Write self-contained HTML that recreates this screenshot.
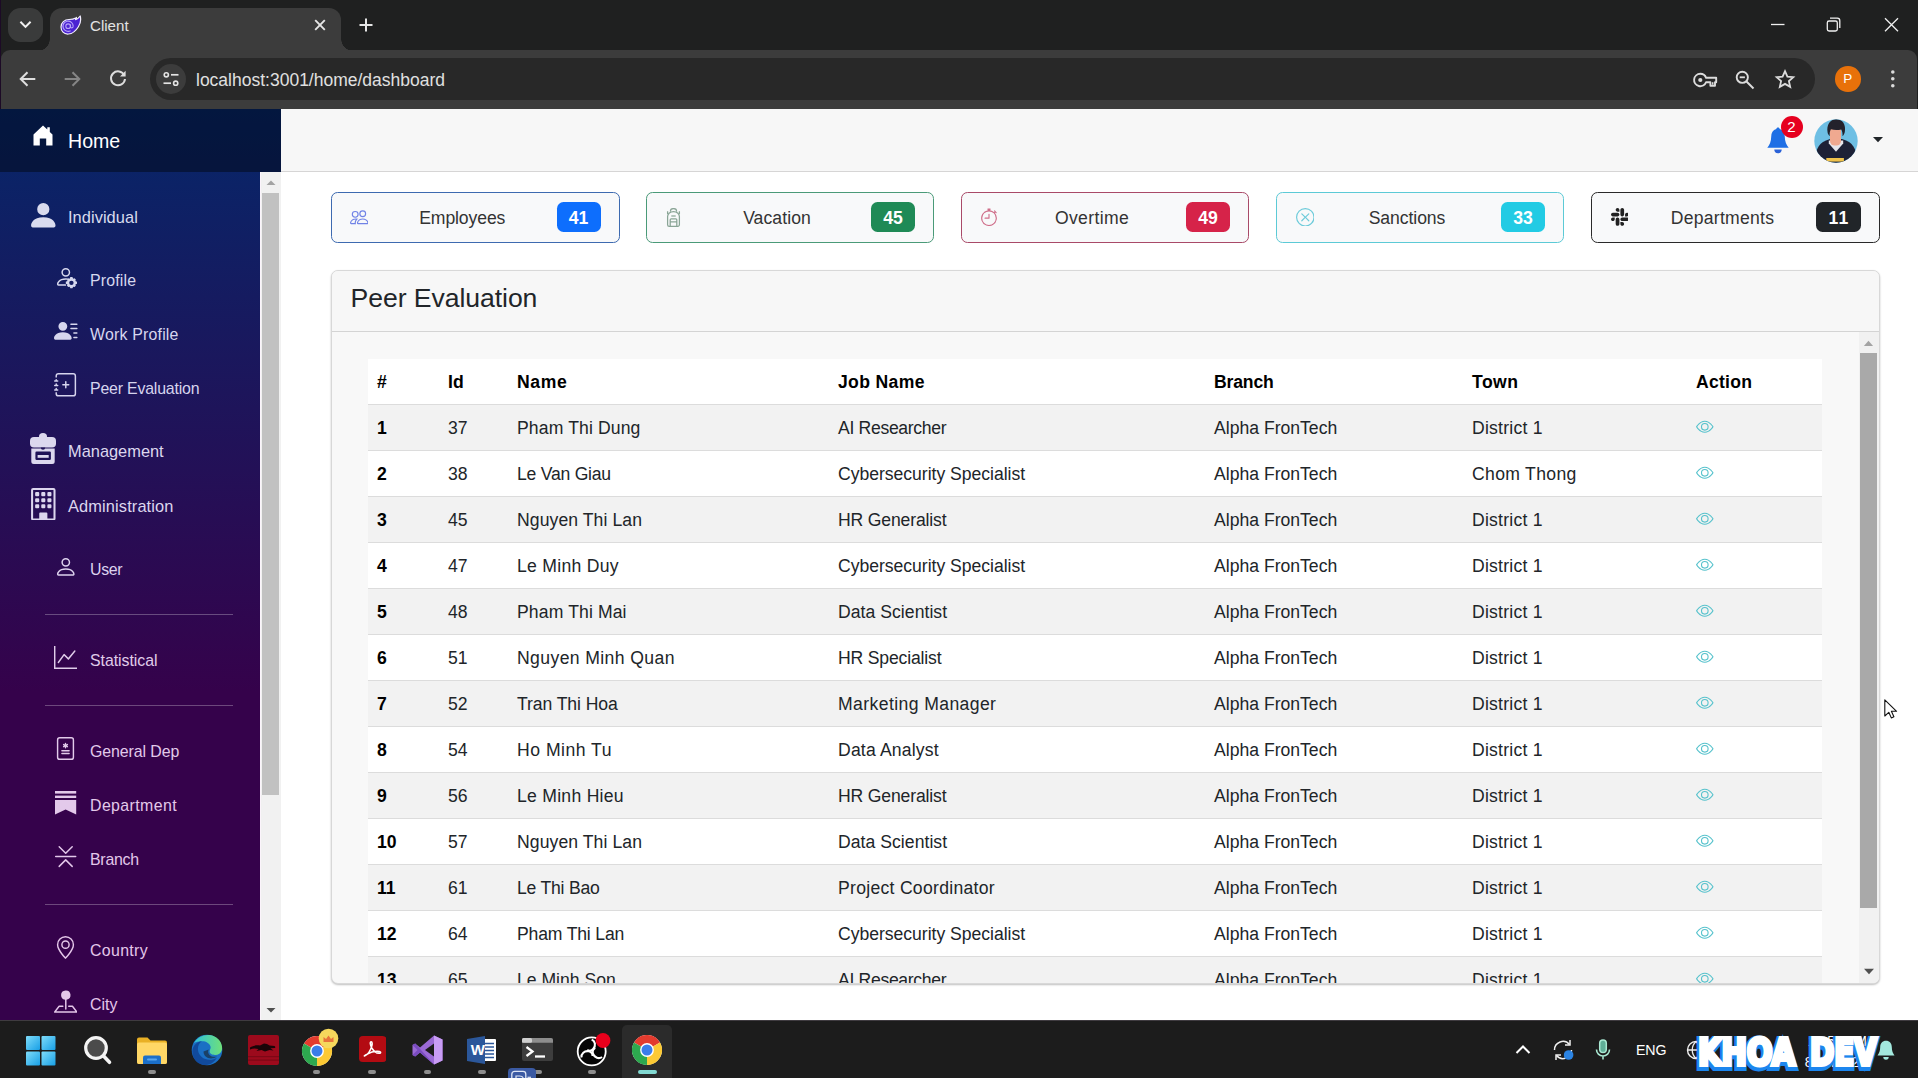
<!DOCTYPE html>
<html lang="en">
<head>
<meta charset="utf-8">
<title>Client</title>
<style>
*{box-sizing:border-box;margin:0;padding:0}
html,body{width:1918px;height:1078px;overflow:hidden;background:#1f2020}
body{position:relative;font-family:"Liberation Sans",sans-serif;color:#212529;font-size:17.6px}
.abs{position:absolute}
svg{display:block}
/* ---------- browser chrome ---------- */
#tabstrip{left:0;top:0;width:1918px;height:49px;background:#1f2020}
#tabsearch{left:8px;top:8px;width:35px;height:34px;border-radius:12.500px;background:#3a3b3b}
#tab{left:50px;top:7.500px;width:291px;height:43px;background:#3c3c3c;border-radius:12px 12px 0 0}
#tab:before,#tab:after{content:"";position:absolute;bottom:0;width:12px;height:12px}
#tab:before{left:-12px;background:radial-gradient(circle at 0 0,transparent 11.5px,#3c3c3c 12px)}
#tab:after{right:-12px;background:radial-gradient(circle at 100% 0,transparent 11.5px,#3c3c3c 12px)}
#tabtitle{left:90px;top:16px;font-size:15.100px;color:#e3e3e3;line-height:20px}
#toolbar{left:1px;top:49.5px;width:1916px;height:59px;background:#3c3c3c;border-radius:9px 9px 0 0}
#omni{left:150px;top:58px;width:1665px;height:42px;border-radius:21px;background:#282828}
#omnichip{left:156px;top:64px;width:30px;height:30px;border-radius:15px;background:#3c3c3c}
#url{left:196px;top:68.600px;font-size:17.500px;line-height:22px;color:#e0e0e0;white-space:nowrap;letter-spacing:0}
#pavatar{left:1835px;top:66px;width:25.5px;height:25.5px;border-radius:50%;background:#e8710a;color:#fff;font-size:13.5px;line-height:25px;text-align:center}
/* ---------- sidebar ---------- */
#sidebar{left:0;top:109px;width:281px;height:911px;background:linear-gradient(180deg,#06276a 0%,#35024b 64%)}
#sidehead{left:0;top:0;width:281px;height:63px;background:rgba(0,0,0,.4)}
#hometxt{left:68px;top:19px;font-size:19.6px;line-height:26px;color:#fff;white-space:nowrap}
#sidescroll{left:260px;top:63px;width:21px;height:848px;background:#f1f1f1;border-left:1px solid #fbf4fb}
#sidethumb{left:1.200px;top:21px;width:16.700px;height:602px;background:#c1c1c1}
.nav{position:absolute;white-space:nowrap;color:rgba(255,255,255,.84);font-size:15.900px;line-height:20px;margin-top:.800px}
.nav.g{font-size:16.400px;margin-top:-.200px}
.nav.g{left:68px}
.nav.s{left:90px}
.ico{position:absolute}
.hr{position:absolute;left:45px;width:188px;height:1px;background:rgba(255,255,255,.28)}
/* ---------- top bar ---------- */
#topbar{left:281px;top:109px;width:1637px;height:63px;background:#f7f7f7;border-bottom:1px solid #d6d5d5}
/* ---------- main ---------- */
#main{left:281px;top:172px;width:1637px;height:848px;background:#fff}
.card{position:absolute;top:192px;width:288px;height:50.500px;border-radius:6.500px;border:1.200px solid;background:#f8f9fa}
.card .lbl{position:absolute;left:0;right:26px;top:14px;text-align:center;font-size:17.6px;line-height:22px;color:#333}
.card .badge{position:absolute;right:18px;top:8.700px;width:44px;height:30px;border-radius:6.500px;color:#fff;font-weight:700;font-size:17.6px;line-height:30px;padding-top:1px;text-align:center}
.card .ci{position:absolute}
#panel{left:331px;top:270px;width:1549px;height:714px;border:1px solid #d8d8d8;border-radius:7px;background:#f8f8f8;overflow:hidden;box-shadow:0 1px 2px rgba(0,0,0,.25)}
#phead{left:0;top:0;width:1547px;height:61px;background:#f7f7f7;border-bottom:1px solid #d4d4d4}
#ptitle{left:18.500px;top:10.800px;font-size:26.600px;letter-spacing:-.06px;line-height:32px;color:#212529;white-space:nowrap}
#pbody{left:0;top:61px;width:1547px;height:652px;overflow:hidden}
table{position:absolute;left:36px;top:27px;width:1454px;border-collapse:collapse;table-layout:fixed;background:#fff}
th,td{height:46px;padding:0 0 0 9px;text-align:left;vertical-align:middle;border-bottom:1px solid #dcdcdc;font-size:17.6px;white-space:nowrap;overflow:hidden}
th{font-weight:700;color:#000;height:45.500px;padding-top:1px}
td{color:#212529;padding-top:1px}
td.b{font-weight:700;color:#000}
tbody tr:nth-child(odd) td{background:#f2f2f2}
.eye{margin-left:0;position:relative;top:-1.500px}
#pscroll{left:1527px;top:61px;width:20px;height:652px;background:#f1f1f1}
#pthumb{left:1.200px;top:20.800px;width:16.800px;height:555px;background:#a9a9a9}
/* ---------- taskbar ---------- */
#taskbar{left:0;top:1020px;width:1918px;height:58px;background:#1c1c1c;overflow:hidden;box-shadow:inset 0 1px 0 #3f3b40}
.pill{position:absolute;top:50px;width:7.500px;height:3.500px;border-radius:2px;background:#8e8e8e}
.wm{position:absolute;font-family:"DejaVu Sans","Liberation Sans",sans-serif;font-weight:700;font-size:36.500px;line-height:44px;letter-spacing:0;white-space:nowrap;height:44px;transform-origin:0 0}
.wm span{position:absolute;left:0;top:0}
.wmb{color:#1c86ee;-webkit-text-stroke:8px #1c86ee;transform:translate(-1px,1.500px)}
.wmf{color:#fff;-webkit-text-stroke:4px #fff}
</style>
</head>
<body>
<div id="tabstrip" class="abs"></div>
<div id="tabsearch" class="abs"><svg width="35" height="34" viewBox="0 0 35 34"><path d="M12.400 13.800l5.100 5.100 5.100-5.100" fill="none" stroke="#f0f0f0" stroke-width="2" stroke-linecap="butt" stroke-linejoin="miter"/></svg></div>
<div id="toolbar" class="abs"></div>
<div id="tab" class="abs"></div>
<!-- favicon -->
<svg class="abs" style="left:59.500px;top:15px" width="22" height="20" viewBox="0 0 22 20">
<path d="M20.200 1c1 3.800.300 7.400-1.800 10.700-2.200 3.600-5.600 6.900-10 7.300C3.900 19.400 1 16 1 12 1 7.600 4.500 4.600 9 4.500c2.900-.1 5-.6 6.700-1.600l.7-.5c-.2.900-.4 1.500-.8 2.200 1.900-.7 3.400-1.900 4.600-3.600z" fill="#4b23d2" stroke="#f3efff" stroke-width="1.200" stroke-linejoin="round"/>
<path d="M13.200 11.300a5.100 5.100 0 1 0-2.600 4.400" fill="none" stroke="#b6a3f7" stroke-width="1.150"/>
<circle cx="8.100" cy="11.200" r="2.300" fill="none" stroke="#b6a3f7" stroke-width="1.100"/>
<path d="M10.500 9.500v2.400c0 1.300 2.600 1.400 2.700-.6" fill="none" stroke="#b6a3f7" stroke-width="1.100"/>
</svg>
<div id="tabtitle" class="abs">Client</div>
<svg class="abs" style="left:312px;top:17px" width="16" height="16" viewBox="0 0 16 16"><path d="M3.200 3.200l9.600 9.600M12.800 3.200l-9.600 9.600" stroke="#e6e6e6" stroke-width="1.900" fill="none"/></svg>
<svg class="abs" style="left:357px;top:16px" width="18" height="18" viewBox="0 0 18 18"><path d="M9 2.500v13M2.500 9h13" stroke="#e6e6e6" stroke-width="2" fill="none"/></svg>
<!-- window controls -->
<svg class="abs" style="left:1765px;top:12px" width="140" height="26" viewBox="0 0 140 26">
<path d="M6 12.500h13.500" stroke="#f0f0f0" stroke-width="1.300" fill="none"/>
<rect x="62.300" y="9" width="10" height="10" rx="1.800" fill="none" stroke="#f0f0f0" stroke-width="1.300"/>
<path d="M65 6.200h7.300a2.500 2.500 0 0 1 2.500 2.500v7.300" fill="none" stroke="#f0f0f0" stroke-width="1.300"/>
<path d="M120 6.300l13 13M133 6.300l-13 13" stroke="#f0f0f0" stroke-width="1.300" fill="none"/>
</svg>
<!-- nav buttons -->
<svg class="abs" style="left:16px;top:67px" width="24" height="24" viewBox="0 0 24 24"><path d="M19.300 12H4.800M11.500 5.200L4.700 12l6.800 6.800" stroke="#dedede" stroke-width="2" fill="none"/></svg>
<svg class="abs" style="left:60px;top:67px" width="24" height="24" viewBox="0 0 24 24"><path d="M4.700 12h14.500M12.500 5.200l6.800 6.800-6.800 6.800" stroke="#858585" stroke-width="2" fill="none"/></svg>
<svg class="abs" style="left:106px;top:67px" width="24" height="24" viewBox="0 0 24 24"><path d="M18.300 8.200A7 7 0 1 0 19 12" stroke="#dedede" stroke-width="2" fill="none"/><path d="M19.600 3.800v5.600H14z" fill="#dedede"/></svg>
<div id="omni" class="abs"></div>
<div id="omnichip" class="abs"></div>
<svg class="abs" style="left:161px;top:69px" width="20" height="20" viewBox="0 0 20 20"><circle cx="5.300" cy="5.800" r="2.100" fill="none" stroke="#e3e3e3" stroke-width="1.600"/><path d="M10 5.800h7.500" stroke="#e3e3e3" stroke-width="1.700"/><circle cx="14.700" cy="14.200" r="2.100" fill="none" stroke="#e3e3e3" stroke-width="1.600"/><path d="M2.500 14.200H10" stroke="#e3e3e3" stroke-width="1.700"/></svg>
<div id="url" class="abs">localhost:3001/home/dashboard</div>
<!-- key -->
<svg class="abs" style="left:1692px;top:70px" width="26" height="20" viewBox="0 0 26 20"><path d="M8.300 3.800a6.200 6.200 0 1 0 5.800 8.400h4.300v3.600h4.600v-3.600h1.200V7.800H14.100A6.200 6.200 0 0 0 8.300 3.800z" fill="none" stroke="#dcdcdc" stroke-width="1.900" stroke-linejoin="round"/><circle cx="8.300" cy="10" r="2.100" fill="#dcdcdc"/><path d="M20.700 12.200v2.500" stroke="#dcdcdc" stroke-width="1.500"/></svg>
<!-- zoom out -->
<svg class="abs" style="left:1734px;top:69px" width="22" height="22" viewBox="0 0 22 22"><circle cx="8.300" cy="8.300" r="5.600" fill="none" stroke="#dcdcdc" stroke-width="1.900"/><path d="M12.500 12.500l7 7" stroke="#dcdcdc" stroke-width="2"/><path d="M5.700 8.300h5.200" stroke="#dcdcdc" stroke-width="1.800"/></svg>
<!-- star -->
<svg class="abs" style="left:1774px;top:68px" width="22" height="22" viewBox="0 0 22 22"><path d="M11 3.200l2.400 5.400 5.900.6-4.400 3.900 1.300 5.800L11 15.900l-5.200 3 1.300-5.800L2.700 9.200l5.900-.6z" fill="none" stroke="#dcdcdc" stroke-width="1.800" stroke-linejoin="miter"/></svg>
<div id="pavatar" class="abs">P</div>
<svg class="abs" style="left:1888px;top:68px" width="10" height="22" viewBox="0 0 10 22"><circle cx="4.800" cy="4" r="1.800" fill="#dcdcdc"/><circle cx="4.800" cy="10.800" r="1.800" fill="#dcdcdc"/><circle cx="4.800" cy="17.700" r="1.800" fill="#dcdcdc"/></svg>
<div class="abs" style="left:0;top:0;width:1px;height:1020px;background:#1c0a26"></div>
<div id="sidebar" class="abs">
<div id="sidehead" class="abs">
<svg class="ico" style="left:33px;top:16px" width="20" height="21" viewBox="0 0 20 21"><path d="M10 .600l4.300 4V2.200h2.500v4.700l2.700 2.500v11h-6.300v-6.800H6.800v6.800H.5v-11z" fill="#fff"/></svg>
<div id="hometxt" class="abs">Home</div></div>
<div id="sidescroll" class="abs"><div id="sidethumb" class="abs"></div>
<svg class="abs" style="left:4px;top:7px" width="12" height="8" viewBox="0 0 12 8"><path d="M6 1.500l4.500 4.500h-9z" fill="#a3a3a3"/></svg>
<svg class="abs" style="left:4px;top:833.500px" width="12" height="8" viewBox="0 0 12 8"><path d="M6 6.500L1.500 2h9z" fill="#505050"/></svg>
</div>
<!-- Individual : person-fill -->
<svg class="ico" style="left:26.700px;top:89.600px" width="32.600" height="32.600" viewBox="0 0 16 16" fill="#d9dbee"><path d="M3 14s-1 0-1-1 1-4 6-4 6 3 6 4-1 1-1 1zm5-6a3 3 0 1 0 0-6 3 3 0 0 0 0 6"/></svg>
<div class="nav g" style="color:#d9dbee;top:98px;letter-spacing:0.06px">Individual</div>
<!-- Profile : person-gear -->
<svg class="ico" style="left:53.600px;top:156px" width="23.600" height="23.600" viewBox="0 0 16 16" fill="#d6d8ee"><path d="M11 5a3 3 0 1 1-6 0 3 3 0 0 1 6 0M8 7a2 2 0 1 0 0-4 2 2 0 0 0 0 4m.256 7a4.500 4.500 0 0 1-.229-1.004H3c.001-.246.154-.986.832-1.664C4.484 10.680 5.711 10 8 10q.390 0 .740.025c.226-.341.496-.650.804-.918Q8.844 9.002 8 9c-5 0-6 3-6 4s1 1 1 1z"/><path d="M12.500 8.200l.5 1.100.9-.3.900.9-.3.900 1.100.5v1.400l-1.100.5.300.9-.9.900-.9-.3-.5 1.100h-1.400l-.5-1.100-.9.300-.9-.9.300-.9-1.100-.5v-1.400l1.100-.5-.3-.9.900-.9.900.3.500-1.100zM11.800 10.600a1.500 1.500 0 1 0 0 3 1.500 1.500 0 0 0 0-3z" fill-rule="evenodd"/></svg>
<div class="nav s" style="color:#d6d8ee;top:161px;letter-spacing:0.18px">Profile</div>
<!-- Work Profile : person-lines-fill -->
<svg class="ico" style="left:54px;top:209.800px" width="23.600" height="23.600" viewBox="0 0 16 16" fill="#d6d6ee"><path d="M6 8a3 3 0 1 0 0-6 3 3 0 0 0 0 6m-5 6s-1 0-1-1 1-4 6-4 6 3 6 4-1 1-1 1zM11 3.500a.5.5 0 0 1 .5-.5h4a.5.5 0 0 1 0 1h-4a.5.5 0 0 1-.5-.5m.5 2.500a.5.5 0 0 0 0 1h4a.5.5 0 0 0 0-1zm2 3a.5.5 0 0 0 0 1h2a.5.5 0 0 0 0-1zm0 3a.5.5 0 0 0 0 1h2a.5.5 0 0 0 0-1z"/></svg>
<div class="nav s" style="color:#d6d6ee;top:215px;letter-spacing:0.20px">Work Profile</div>
<!-- Peer Evaluation : journal-plus -->
<svg class="ico" style="left:53.500px;top:264px" width="23.600" height="23.600" viewBox="0 0 16 16" fill="#d6d4ee"><path fill-rule="evenodd" d="M8 5.500a.5.5 0 0 1 .5.5v1.500H10a.5.5 0 0 1 0 1H8.500V10a.5.5 0 0 1-1 0V8.500H6a.5.5 0 0 1 0-1h1.500V6a.5.5 0 0 1 .5-.5"/><path d="M3 0h10a2 2 0 0 1 2 2v12a2 2 0 0 1-2 2H3a2 2 0 0 1-2-2v-1h1v1a1 1 0 0 0 1 1h10a1 1 0 0 0 1-1V2a1 1 0 0 0-1-1H3a1 1 0 0 0-1 1v1H1V2a2 2 0 0 1 2-2"/><path d="M1 5v-.5a.5.5 0 0 1 1 0V5h.5a.5.5 0 0 1 0 1h-2a.5.5 0 0 1 0-1zm0 3v-.5a.5.5 0 0 1 1 0V8h.5a.5.5 0 0 1 0 1h-2a.5.5 0 0 1 0-1zm0 3v-.5a.5.5 0 0 1 1 0v.5h.5a.5.5 0 0 1 0 1h-2a.5.5 0 0 1 0-1z"/></svg>
<div class="nav s" style="color:#d6d4ee;top:269px;letter-spacing:-0.19px">Peer Evaluation</div>
<!-- Management : backpack -->
<svg class="ico" style="left:27px;top:323px" width="32" height="34" viewBox="0 0 32 34"><path d="M12 4.500a4 3.500 0 0 1 8 0v1.500h-8z" fill="#dcd8ee"/><rect x="3" y="5" width="26" height="10.500" rx="4" fill="#dcd8ee"/><path d="M4.300 16.500h23.400v13a2.500 2.500 0 0 1-2.500 2.500H6.800a2.500 2.500 0 0 1-2.500-2.500z" fill="#dcd8ee"/><path d="M13.800 15.600a2.200 2.200 0 0 0 4.400 0z" fill="#1f1258"/><rect x="8.400" y="19.600" width="15.500" height="8.400" rx="1.200" fill="#1f1258"/><rect x="10.600" y="23" width="11.100" height="2.800" fill="#dcd8ee"/></svg>
<div class="nav g" style="color:#dcd8ee;top:332px">Management</div>
<!-- Administration : building -->
<svg class="ico" style="left:26.800px;top:378.600px" width="32.600" height="32.600" viewBox="0 0 16 16" fill="#dcd6ee"><path d="M4 2.500a.5.5 0 0 1 .5-.5h1a.5.5 0 0 1 .5.5v1a.5.5 0 0 1-.5.5h-1a.5.5 0 0 1-.5-.5zm3 0a.5.5 0 0 1 .5-.5h1a.5.5 0 0 1 .5.5v1a.5.5 0 0 1-.5.5h-1a.5.5 0 0 1-.5-.5zm3.500-.5a.5.5 0 0 0-.5.5v1a.5.5 0 0 0 .5.5h1a.5.5 0 0 0 .5-.5v-1a.5.5 0 0 0-.5-.5zM4 5.500a.5.5 0 0 1 .5-.5h1a.5.5 0 0 1 .5.5v1a.5.5 0 0 1-.5.5h-1a.5.5 0 0 1-.5-.5zM7.500 5a.5.5 0 0 0-.5.5v1a.5.5 0 0 0 .5.5h1a.5.5 0 0 0 .5-.5v-1a.5.5 0 0 0-.5-.5zm2.500.5a.5.5 0 0 1 .5-.5h1a.5.5 0 0 1 .5.5v1a.5.5 0 0 1-.5.5h-1a.5.5 0 0 1-.5-.5zM4.500 8a.5.5 0 0 0-.5.5v1a.5.5 0 0 0 .5.5h1a.5.5 0 0 0 .5-.5v-1a.5.5 0 0 0-.5-.5zm2.500.5a.5.5 0 0 1 .5-.5h1a.5.5 0 0 1 .5.5v1a.5.5 0 0 1-.5.5h-1a.5.5 0 0 1-.5-.5zm3.500-.5a.5.5 0 0 0-.5.5v1a.5.5 0 0 0 .5.5h1a.5.5 0 0 0 .5-.5v-1a.5.5 0 0 0-.5-.5z"/><path d="M2 1a1 1 0 0 1 1-1h10a1 1 0 0 1 1 1v14a1 1 0 0 1-1 1H3a1 1 0 0 1-1-1zm11 0H3v14h3v-2.500a.5.5 0 0 1 .5-.5h3a.5.5 0 0 1 .5.5V15h3z"/></svg>
<div class="nav g" style="color:#dcd6ee;top:387px;letter-spacing:0.12px">Administration</div>
<!-- User : person -->
<svg class="ico" style="left:53.800px;top:445.800px" width="23.600" height="23.600" viewBox="0 0 16 16" fill="#ddd2ee"><path d="M8 8a3 3 0 1 0 0-6 3 3 0 0 0 0 6m2-3a2 2 0 1 1-4 0 2 2 0 0 1 4 0m4 8c0 1-1 1-1 1H3s-1 0-1-1 1-4 6-4 6 3 6 4m-1-.004c-.001-.246-.154-.986-.832-1.664C11.516 10.680 10.289 10 8 10s-3.516.680-4.168 1.332c-.678.678-.830 1.418-.832 1.664z"/></svg>
<div class="nav s" style="color:#ddd2ee;top:450px;letter-spacing:-0.35px">User</div>
<div class="hr" style="top:505px"></div>
<!-- Statistical : graph-up -->
<svg class="ico" style="left:54.100px;top:537px" width="23" height="23" viewBox="0 0 16 16" fill="#e0cdea"><path fill-rule="evenodd" d="M0 0h1v15h15v1H0zm14.817 3.113a.5.5 0 0 1 .070.704l-4.500 5.500a.5.5 0 0 1-.740.037L7.060 6.767l-3.656 5.027a.5.5 0 0 1-.808-.588l4-5.500a.5.5 0 0 1 .758-.060l2.609 2.610 4.150-5.073a.5.5 0 0 1 .704-.070"/></svg>
<div class="nav s" style="color:#e0cdea;top:541px;letter-spacing:-0.05px">Statistical</div>
<div class="hr" style="top:596px"></div>
<!-- General Dep : file-medical -->
<svg class="ico" style="left:54px;top:627.900px" width="23" height="23" viewBox="0 0 16 16" fill="#e2caea"><path d="M8.500 4.500a.5.5 0 0 0-1 0v.634l-.549-.317a.5.5 0 1 0-.5.866L7 6l-.549.317a.5.5 0 1 0 .5.866l.549-.317V7.500a.5.5 0 1 0 1 0v-.634l.549.317a.5.5 0 1 0 .5-.866L9 6l.549-.317a.5.5 0 1 0-.5-.866l-.549.317zM5.500 9a.5.5 0 0 0 0 1h5a.5.5 0 0 0 0-1zm0 2a.5.5 0 0 0 0 1h5a.5.5 0 0 0 0-1z"/><path d="M2 2a2 2 0 0 1 2-2h8a2 2 0 0 1 2 2v12a2 2 0 0 1-2 2H4a2 2 0 0 1-2-2zm10-1H4a1 1 0 0 0-1 1v12a1 1 0 0 0 1 1h8a1 1 0 0 0 1-1V2a1 1 0 0 0-1-1"/></svg>
<div class="nav s" style="color:#e2caea;top:632px;letter-spacing:-0.08px">General Dep</div>
<!-- Department -->
<svg class="ico" style="left:55px;top:681.500px" width="21.500" height="24" viewBox="0 0 21.500 24" fill="#e3c9ea"><rect x="0" y="0" width="21.200" height="2.600"/><rect x="0" y="4.600" width="21.200" height="2.400"/><path d="M0 9h21.200v14.500L10.600 18.600 0 23.500z"/></svg>
<div class="nav s" style="color:#e3c9ea;top:686px;letter-spacing:0.40px">Department</div>
<!-- Branch : chevron-bar-contract -->
<svg class="ico" style="left:54px;top:736px" width="24" height="23" viewBox="0 0 24 23" fill="none" stroke="#e3c8ea" stroke-width="1.500" stroke-linecap="round" stroke-linejoin="round"><path d="M5.200 1.700l6.500 6.500 6.500-6.500M1.700 11.600h20M5.200 21.400l6.500-6.500 6.500 6.500"/></svg>
<div class="nav s" style="color:#e3c8ea;top:740px;letter-spacing:-0.25px">Branch</div>
<div class="hr" style="top:795px"></div>
<!-- Country : geo-alt -->
<svg class="ico" style="left:53.800px;top:826.900px" width="23" height="23" viewBox="0 0 16 16" fill="#e4c7e9"><path d="M12.166 8.940c-.524 1.062-1.234 2.120-1.960 3.070A32 32 0 0 1 8 14.580a32 32 0 0 1-2.206-2.570c-.726-.950-1.436-2.008-1.960-3.070C3.304 7.867 3 6.862 3 6a5 5 0 0 1 10 0c0 .862-.305 1.867-.834 2.940M8 16s6-5.686 6-10A6 6 0 0 0 2 6c0 4.314 6 10 6 10"/><path d="M8 8a2 2 0 1 1 0-4 2 2 0 0 1 0 4m0 1a3 3 0 1 0 0-6 3 3 0 0 0 0 6"/></svg>
<div class="nav s" style="color:#e4c7e9;top:831px;letter-spacing:0.33px">Country</div>
<!-- City : pin-map-fill -->
<svg class="ico" style="left:53.800px;top:879.500px" width="23.600" height="24" viewBox="0 0 16 16" fill="#e4c7e9"><path fill-rule="evenodd" d="M3.100 11.200a.5.5 0 0 1 .4-.2H6a.5.5 0 0 1 0 1H3.750L1.500 15h13l-2.250-3H10a.5.5 0 0 1 0-1h2.500a.5.5 0 0 1 .4.2l3 4a.5.5 0 0 1-.4.8H.5a.5.5 0 0 1-.4-.8z"/><path fill-rule="evenodd" d="M4.800 4a3.200 3.200 0 1 1 3.700 3.160V13.500a.5.5 0 0 1-1 0V7.160A3.200 3.200 0 0 1 4.800 4"/></svg>
<div class="nav s" style="color:#e4c7e9;top:885px;letter-spacing:0.04px">City</div>
</div>
<div id="topbar" class="abs"></div>
<!-- bell -->
<svg class="abs" style="left:1765px;top:126px" width="26" height="30" viewBox="0 0 26 30"><path d="M13 1.500c-.9 0-1.700.7-1.700 1.600-3.400.9-5.100 3.900-5.100 7.700 0 4.800-1.600 8.300-3.900 10.900h21.400c-2.300-2.600-3.900-6.100-3.900-10.900 0-3.800-1.700-6.800-5.100-7.700 0-.9-.8-1.600-1.700-1.600z" fill="#1f6fe5"/><path d="M9.300 23.600h7.400a3.700 3.700 0 0 1-7.400 0z" fill="#2a62d8"/></svg>
<div class="abs" style="left:1780.500px;top:116px;width:22px;height:22px;border-radius:50%;background:#e6001f;color:#fff;font-size:15px;line-height:22px;text-align:center">2</div>
<!-- avatar -->
<svg class="abs" style="left:1814px;top:119px" width="44" height="44" viewBox="0 0 44 44">
<defs><clipPath id="avc"><circle cx="22" cy="22" r="21.700"/></clipPath></defs>
<g clip-path="url(#avc)">
<rect width="44" height="44" fill="#6ebfe4"/>
<path d="M1 44c0-10 2-19 11-22.500l4-1.500h12l4 1.500c9 3.500 11 12.500 11 22.500z" fill="#1d2136"/>
<path d="M14.800 24.500l7.200 8.200 7.200-8.200v-3h-14.400z" fill="#e6e6ec"/>
<rect x="16" y="7" width="11" height="19.500" rx="4.500" fill="#f0a990"/>
<path d="M13.600 13.500c-1.300-7.500 2.400-13.300 8.600-13.300 6.400 0 10 5.300 8.600 12.800-.4 2-1.300 3.300-2.300 4.300.3-3.100-.3-5.300-1.300-6.900-2.800.8-7.400.9-10.300-.2-1 1.700-1.500 4.200-1.100 7-1.100-.9-1.900-2.100-2.200-3.700z" fill="#23222c"/>
<rect x="12.300" y="39" width="17.600" height="3.600" fill="#efc24c"/>
</g></svg>
<svg class="abs" style="left:1872px;top:136px" width="12" height="7" viewBox="0 0 12 7"><path d="M1 1h10L6 6.200z" fill="#212529"/></svg>

<div id="main" class="abs"></div>
<div class="card" style="left:331px;border-color:#3d6ab0;width:288.500px"><svg class="ci" style="left:17.500px;top:15px" width="18.500" height="18.500" viewBox="0 0 16 16" fill="#7083e6"><path d="M15 14s1 0 1-1-1-4-5-4-5 3-5 4 1 1 1 1zm-7.978-1L7 12.996c.001-.264.167-1.030.760-1.720C8.312 10.629 9.282 10 11 10c1.717 0 2.687.630 3.240 1.276.593.690.758 1.457.760 1.720l-.8.002-.14.002zM11 7a2 2 0 1 0 0-4 2 2 0 0 0 0 4m3-2a3 3 0 1 1-6 0 3 3 0 0 1 6 0M6.936 9.280a6 6 0 0 0-1.230-.247A7 7 0 0 0 5 9c-4 0-5 3-5 4q0 1 1 1h4.216A2.240 2.240 0 0 1 5 13c0-1.010.377-2.042 1.090-2.904.243-.294.526-.569.846-.816M4.920 10A5.500 5.500 0 0 0 4 13H1c0-.260.164-1.030.760-1.724.545-.636 1.492-1.256 3.160-1.275ZM1.500 5.500a3 3 0 1 1 6 0 3 3 0 0 1-6 0m3-2a2 2 0 1 0 0 4 2 2 0 0 0 0-4"/></svg><div class="lbl"><span style="letter-spacing:-0.11px">Employees</span></div><div class="badge" style="background:#0d6efd">41</div></div>
<div class="card" style="left:646px;border-color:#4a9a78"><svg class="ci" style="left:18px;top:14.800px" width="17" height="19.500" viewBox="0 0 17 19.500" fill="none" stroke="#8aa596" stroke-width="1.250"><path d="M5.500 3.800V2.800a3 2.200 0 0 1 6 0v1"/><path d="M2.600 8.500a5.900 5 0 0 1 11.800 0v8.200a1.600 1.600 0 0 1-1.600 1.600H4.200a1.600 1.600 0 0 1-1.600-1.600z"/><path d="M2.600 6V3.200M14.400 6V3.200"/><path d="M5.200 18v-6.200a1 1 0 0 1 1-1h4.600a1 1 0 0 1 1 1V18M5.200 13.800h6.600"/><path d="M6.300 8h4.400"/></svg><div class="lbl"><span style="letter-spacing:0.07px">Vacation</span></div><div class="badge" style="background:#1f8a56">45</div></div>
<div class="card" style="left:961px;border-color:#a94a68"><svg class="ci" style="left:18px;top:15px" width="18" height="18" viewBox="0 0 16 16" fill="#cf6f8a"><path d="M8.500 5.600a.5.5 0 1 0-1 0v2.900h-3a.5.5 0 0 0 0 1H8a.5.5 0 0 0 .5-.5z"/><path d="M6.500 1A.5.5 0 0 1 7 .5h2a.5.5 0 0 1 0 1v.570c1.360.196 2.594.780 3.584 1.640l.012-.013.354-.354-.354-.353a.5.5 0 0 1 .707-.708l1.414 1.415a.5.5 0 1 1-.707.707l-.353-.354-.354.354-.013.012A7 7 0 1 1 7 2.071V1.500a.5.5 0 0 1-.5-.5M8 3a6 6 0 1 0 .001 12A6 6 0 0 0 8 3"/></svg><div class="lbl"><span style="letter-spacing:0.36px">Overtime</span></div><div class="badge" style="background:#d62349">49</div></div>
<div class="card" style="left:1276px;border-color:#5ccad6"><svg class="ci" style="left:18.500px;top:14.500px" width="18.600" height="18.600" viewBox="0 0 16 16" fill="#6dcbda"><path d="M8 15A7 7 0 1 1 8 1a7 7 0 0 1 0 14m0 1A8 8 0 1 0 8 0a8 8 0 0 0 0 16"/><path d="M4.646 4.646a.5.5 0 0 1 .708 0L8 7.293l2.646-2.647a.5.5 0 0 1 .708.708L8.707 8l2.647 2.646a.5.5 0 0 1-.708.708L8 8.707l-2.646 2.647a.5.5 0 0 1-.708-.708L7.293 8 4.646 5.354a.5.5 0 0 1 0-.708"/></svg><div class="lbl"><span style="letter-spacing:-0.08px">Sanctions</span></div><div class="badge" style="background:#22cbe4">33</div></div>
<div class="card" style="left:1591px;border-color:#2a2a2a;width:289px"><svg class="ci" style="left:18.500px;top:15px" width="17.800" height="17.800" viewBox="0 0 16 16" fill="#222"><path d="M3.362 10.110c0 .926-.756 1.681-1.681 1.681S0 11.036 0 10.111.756 8.430 1.680 8.430h1.682zm.846 0c0-.924.756-1.680 1.681-1.680s1.681.756 1.681 1.680v4.210c0 .924-.756 1.680-1.680 1.680a1.685 1.685 0 0 1-1.682-1.680zM5.890 3.362c-.926 0-1.682-.756-1.682-1.681S4.964 0 5.890 0s1.680.756 1.680 1.680v1.682zm0 .846c.924 0 1.680.756 1.680 1.681S6.814 7.570 5.890 7.570H1.680C.757 7.570 0 6.814 0 5.890c0-.926.756-1.682 1.680-1.682zm6.749 1.682c0-.926.755-1.682 1.680-1.682S16 4.964 16 5.889s-.756 1.681-1.680 1.681h-1.681zm-.848 0c0 .924-.755 1.680-1.680 1.680A1.685 1.685 0 0 1 8.430 5.890V1.680C8.430.757 9.186 0 10.110 0c.926 0 1.681.756 1.681 1.680zm-1.681 6.748c.926 0 1.682.756 1.682 1.681S11.036 16 10.110 16s-1.681-.756-1.681-1.680v-1.682h1.680zm0-.847c-.924 0-1.680-.755-1.680-1.680s.756-1.681 1.680-1.681h4.210c.924 0 1.680.756 1.680 1.680 0 .926-.756 1.681-1.680 1.681z"/></svg><div class="lbl"><span style="letter-spacing:0.25px">Departments</span></div><div class="badge" style="background:#212529;width:45px;letter-spacing:1.200px;text-indent:1px">11</div></div>
<div id="panel" class="abs">
<div id="phead" class="abs"><div id="ptitle" class="abs">Peer Evaluation</div></div>
<div id="pbody" class="abs">
<table>
<colgroup><col style="width:71px"><col style="width:69px"><col style="width:321px"><col style="width:376px"><col style="width:258px"><col style="width:224px"><col style="width:135px"></colgroup>
<thead><tr><th>#</th><th>Id</th><th><span style="letter-spacing:0.60px">Name</span></th><th><span style="letter-spacing:0.34px">Job Name</span></th><th><span style="letter-spacing:-0.17px">Branch</span></th><th><span style="letter-spacing:0.46px">Town</span></th><th><span style="letter-spacing:0.25px">Action</span></th></tr></thead>
<tbody>
<tr><td class="b">1</td><td>37</td><td><span style="letter-spacing:0.12px">Pham Thi Dung</span></td><td><span style="letter-spacing:-0.32px">AI Researcher</span></td><td>Alpha FronTech</td><td><span style="letter-spacing:0.23px">District 1</span></td><td><svg class="eye" viewBox="0 0 16 16" width="17.600" height="17.600" fill="#56c2cc"><path d="M16 8s-3-5.500-8-5.500S0 8 0 8s3 5.500 8 5.500S16 8 16 8M1.173 8a13 13 0 0 1 1.660-2.043C4.120 4.668 5.880 3.500 8 3.500s3.879 1.168 5.168 2.457A13 13 0 0 1 14.828 8q-.086.130-.195.288c-.335.480-.830 1.120-1.465 1.755C11.879 11.332 10.119 12.500 8 12.500s-3.879-1.168-5.168-2.457A13 13 0 0 1 1.172 8z"/><path d="M8 5.500a2.500 2.500 0 1 0 0 5 2.500 2.500 0 0 0 0-5M4.500 8a3.500 3.500 0 1 1 7 0 3.500 3.500 0 0 1-7 0"/></svg></td></tr>
<tr><td class="b">2</td><td>38</td><td><span style="letter-spacing:-0.24px">Le Van Giau</span></td><td><span style="letter-spacing:-0.03px">Cybersecurity Specialist</span></td><td>Alpha FronTech</td><td><span style="letter-spacing:0.32px">Chom Thong</span></td><td><svg class="eye" viewBox="0 0 16 16" width="17.600" height="17.600" fill="#56c2cc"><path d="M16 8s-3-5.500-8-5.500S0 8 0 8s3 5.500 8 5.500S16 8 16 8M1.173 8a13 13 0 0 1 1.660-2.043C4.120 4.668 5.880 3.500 8 3.500s3.879 1.168 5.168 2.457A13 13 0 0 1 14.828 8q-.086.130-.195.288c-.335.480-.830 1.120-1.465 1.755C11.879 11.332 10.119 12.500 8 12.500s-3.879-1.168-5.168-2.457A13 13 0 0 1 1.172 8z"/><path d="M8 5.500a2.500 2.500 0 1 0 0 5 2.500 2.500 0 0 0 0-5M4.500 8a3.500 3.500 0 1 1 7 0 3.500 3.500 0 0 1-7 0"/></svg></td></tr>
<tr><td class="b">3</td><td>45</td><td><span style="letter-spacing:0.08px">Nguyen Thi Lan</span></td><td><span style="letter-spacing:-0.16px">HR Generalist</span></td><td>Alpha FronTech</td><td><span style="letter-spacing:0.23px">District 1</span></td><td><svg class="eye" viewBox="0 0 16 16" width="17.600" height="17.600" fill="#56c2cc"><path d="M16 8s-3-5.500-8-5.500S0 8 0 8s3 5.500 8 5.500S16 8 16 8M1.173 8a13 13 0 0 1 1.660-2.043C4.120 4.668 5.880 3.500 8 3.500s3.879 1.168 5.168 2.457A13 13 0 0 1 14.828 8q-.086.130-.195.288c-.335.480-.830 1.120-1.465 1.755C11.879 11.332 10.119 12.500 8 12.500s-3.879-1.168-5.168-2.457A13 13 0 0 1 1.172 8z"/><path d="M8 5.500a2.500 2.500 0 1 0 0 5 2.500 2.500 0 0 0 0-5M4.500 8a3.500 3.500 0 1 1 7 0 3.500 3.500 0 0 1-7 0"/></svg></td></tr>
<tr><td class="b">4</td><td>47</td><td><span style="letter-spacing:0.28px">Le Minh Duy</span></td><td><span style="letter-spacing:-0.03px">Cybersecurity Specialist</span></td><td>Alpha FronTech</td><td><span style="letter-spacing:0.23px">District 1</span></td><td><svg class="eye" viewBox="0 0 16 16" width="17.600" height="17.600" fill="#56c2cc"><path d="M16 8s-3-5.500-8-5.500S0 8 0 8s3 5.500 8 5.500S16 8 16 8M1.173 8a13 13 0 0 1 1.660-2.043C4.120 4.668 5.880 3.500 8 3.500s3.879 1.168 5.168 2.457A13 13 0 0 1 14.828 8q-.086.130-.195.288c-.335.480-.830 1.120-1.465 1.755C11.879 11.332 10.119 12.500 8 12.500s-3.879-1.168-5.168-2.457A13 13 0 0 1 1.172 8z"/><path d="M8 5.500a2.500 2.500 0 1 0 0 5 2.500 2.500 0 0 0 0-5M4.500 8a3.500 3.500 0 1 1 7 0 3.500 3.500 0 0 1-7 0"/></svg></td></tr>
<tr><td class="b">5</td><td>48</td><td><span style="letter-spacing:0.12px">Pham Thi Mai</span></td><td><span style="letter-spacing:0.04px">Data Scientist</span></td><td>Alpha FronTech</td><td><span style="letter-spacing:0.23px">District 1</span></td><td><svg class="eye" viewBox="0 0 16 16" width="17.600" height="17.600" fill="#56c2cc"><path d="M16 8s-3-5.500-8-5.500S0 8 0 8s3 5.500 8 5.500S16 8 16 8M1.173 8a13 13 0 0 1 1.660-2.043C4.120 4.668 5.880 3.500 8 3.500s3.879 1.168 5.168 2.457A13 13 0 0 1 14.828 8q-.086.130-.195.288c-.335.480-.830 1.120-1.465 1.755C11.879 11.332 10.119 12.500 8 12.500s-3.879-1.168-5.168-2.457A13 13 0 0 1 1.172 8z"/><path d="M8 5.500a2.500 2.500 0 1 0 0 5 2.500 2.500 0 0 0 0-5M4.500 8a3.500 3.500 0 1 1 7 0 3.500 3.500 0 0 1-7 0"/></svg></td></tr>
<tr><td class="b">6</td><td>51</td><td><span style="letter-spacing:0.39px">Nguyen Minh Quan</span></td><td><span style="letter-spacing:-0.17px">HR Specialist</span></td><td>Alpha FronTech</td><td><span style="letter-spacing:0.23px">District 1</span></td><td><svg class="eye" viewBox="0 0 16 16" width="17.600" height="17.600" fill="#56c2cc"><path d="M16 8s-3-5.500-8-5.500S0 8 0 8s3 5.500 8 5.500S16 8 16 8M1.173 8a13 13 0 0 1 1.660-2.043C4.120 4.668 5.880 3.500 8 3.500s3.879 1.168 5.168 2.457A13 13 0 0 1 14.828 8q-.086.130-.195.288c-.335.480-.830 1.120-1.465 1.755C11.879 11.332 10.119 12.500 8 12.500s-3.879-1.168-5.168-2.457A13 13 0 0 1 1.172 8z"/><path d="M8 5.500a2.500 2.500 0 1 0 0 5 2.500 2.500 0 0 0 0-5M4.500 8a3.500 3.500 0 1 1 7 0 3.500 3.500 0 0 1-7 0"/></svg></td></tr>
<tr><td class="b">7</td><td>52</td><td><span style="letter-spacing:-0.08px">Tran Thi Hoa</span></td><td><span style="letter-spacing:0.40px">Marketing Manager</span></td><td>Alpha FronTech</td><td><span style="letter-spacing:0.23px">District 1</span></td><td><svg class="eye" viewBox="0 0 16 16" width="17.600" height="17.600" fill="#56c2cc"><path d="M16 8s-3-5.500-8-5.500S0 8 0 8s3 5.500 8 5.500S16 8 16 8M1.173 8a13 13 0 0 1 1.660-2.043C4.120 4.668 5.880 3.500 8 3.500s3.879 1.168 5.168 2.457A13 13 0 0 1 14.828 8q-.086.130-.195.288c-.335.480-.830 1.120-1.465 1.755C11.879 11.332 10.119 12.500 8 12.500s-3.879-1.168-5.168-2.457A13 13 0 0 1 1.172 8z"/><path d="M8 5.500a2.500 2.500 0 1 0 0 5 2.500 2.500 0 0 0 0-5M4.500 8a3.500 3.500 0 1 1 7 0 3.500 3.500 0 0 1-7 0"/></svg></td></tr>
<tr><td class="b">8</td><td>54</td><td><span style="letter-spacing:0.50px">Ho Minh Tu</span></td><td><span style="letter-spacing:0.17px">Data Analyst</span></td><td>Alpha FronTech</td><td><span style="letter-spacing:0.23px">District 1</span></td><td><svg class="eye" viewBox="0 0 16 16" width="17.600" height="17.600" fill="#56c2cc"><path d="M16 8s-3-5.500-8-5.500S0 8 0 8s3 5.500 8 5.500S16 8 16 8M1.173 8a13 13 0 0 1 1.660-2.043C4.120 4.668 5.880 3.500 8 3.500s3.879 1.168 5.168 2.457A13 13 0 0 1 14.828 8q-.086.130-.195.288c-.335.480-.830 1.120-1.465 1.755C11.879 11.332 10.119 12.500 8 12.500s-3.879-1.168-5.168-2.457A13 13 0 0 1 1.172 8z"/><path d="M8 5.500a2.500 2.500 0 1 0 0 5 2.500 2.500 0 0 0 0-5M4.500 8a3.500 3.500 0 1 1 7 0 3.500 3.500 0 0 1-7 0"/></svg></td></tr>
<tr><td class="b">9</td><td>56</td><td><span style="letter-spacing:0.27px">Le Minh Hieu</span></td><td><span style="letter-spacing:-0.16px">HR Generalist</span></td><td>Alpha FronTech</td><td><span style="letter-spacing:0.23px">District 1</span></td><td><svg class="eye" viewBox="0 0 16 16" width="17.600" height="17.600" fill="#56c2cc"><path d="M16 8s-3-5.500-8-5.500S0 8 0 8s3 5.500 8 5.500S16 8 16 8M1.173 8a13 13 0 0 1 1.660-2.043C4.120 4.668 5.880 3.500 8 3.500s3.879 1.168 5.168 2.457A13 13 0 0 1 14.828 8q-.086.130-.195.288c-.335.480-.830 1.120-1.465 1.755C11.879 11.332 10.119 12.500 8 12.500s-3.879-1.168-5.168-2.457A13 13 0 0 1 1.172 8z"/><path d="M8 5.500a2.500 2.500 0 1 0 0 5 2.500 2.500 0 0 0 0-5M4.500 8a3.500 3.500 0 1 1 7 0 3.500 3.500 0 0 1-7 0"/></svg></td></tr>
<tr><td class="b">10</td><td>57</td><td><span style="letter-spacing:0.08px">Nguyen Thi Lan</span></td><td><span style="letter-spacing:0.04px">Data Scientist</span></td><td>Alpha FronTech</td><td><span style="letter-spacing:0.23px">District 1</span></td><td><svg class="eye" viewBox="0 0 16 16" width="17.600" height="17.600" fill="#56c2cc"><path d="M16 8s-3-5.500-8-5.500S0 8 0 8s3 5.500 8 5.500S16 8 16 8M1.173 8a13 13 0 0 1 1.660-2.043C4.120 4.668 5.880 3.500 8 3.500s3.879 1.168 5.168 2.457A13 13 0 0 1 14.828 8q-.086.130-.195.288c-.335.480-.830 1.120-1.465 1.755C11.879 11.332 10.119 12.500 8 12.500s-3.879-1.168-5.168-2.457A13 13 0 0 1 1.172 8z"/><path d="M8 5.500a2.500 2.500 0 1 0 0 5 2.500 2.500 0 0 0 0-5M4.500 8a3.500 3.500 0 1 1 7 0 3.500 3.500 0 0 1-7 0"/></svg></td></tr>
<tr><td class="b">11</td><td>61</td><td><span style="letter-spacing:-0.22px">Le Thi Bao</span></td><td><span style="letter-spacing:0.28px">Project Coordinator</span></td><td>Alpha FronTech</td><td><span style="letter-spacing:0.23px">District 1</span></td><td><svg class="eye" viewBox="0 0 16 16" width="17.600" height="17.600" fill="#56c2cc"><path d="M16 8s-3-5.500-8-5.500S0 8 0 8s3 5.500 8 5.500S16 8 16 8M1.173 8a13 13 0 0 1 1.660-2.043C4.120 4.668 5.880 3.500 8 3.500s3.879 1.168 5.168 2.457A13 13 0 0 1 14.828 8q-.086.130-.195.288c-.335.480-.830 1.120-1.465 1.755C11.879 11.332 10.119 12.500 8 12.500s-3.879-1.168-5.168-2.457A13 13 0 0 1 1.172 8z"/><path d="M8 5.500a2.500 2.500 0 1 0 0 5 2.500 2.500 0 0 0 0-5M4.500 8a3.500 3.500 0 1 1 7 0 3.500 3.500 0 0 1-7 0"/></svg></td></tr>
<tr><td class="b">12</td><td>64</td><td><span style="letter-spacing:-0.17px">Pham Thi Lan</span></td><td><span style="letter-spacing:-0.03px">Cybersecurity Specialist</span></td><td>Alpha FronTech</td><td><span style="letter-spacing:0.23px">District 1</span></td><td><svg class="eye" viewBox="0 0 16 16" width="17.600" height="17.600" fill="#56c2cc"><path d="M16 8s-3-5.500-8-5.500S0 8 0 8s3 5.500 8 5.500S16 8 16 8M1.173 8a13 13 0 0 1 1.660-2.043C4.120 4.668 5.880 3.500 8 3.500s3.879 1.168 5.168 2.457A13 13 0 0 1 14.828 8q-.086.130-.195.288c-.335.480-.830 1.120-1.465 1.755C11.879 11.332 10.119 12.500 8 12.500s-3.879-1.168-5.168-2.457A13 13 0 0 1 1.172 8z"/><path d="M8 5.500a2.500 2.500 0 1 0 0 5 2.500 2.500 0 0 0 0-5M4.500 8a3.500 3.500 0 1 1 7 0 3.500 3.500 0 0 1-7 0"/></svg></td></tr>
<tr><td class="b">13</td><td>65</td><td>Le Minh Son</td><td><span style="letter-spacing:-0.32px">AI Researcher</span></td><td>Alpha FronTech</td><td><span style="letter-spacing:0.23px">District 1</span></td><td><svg class="eye" viewBox="0 0 16 16" width="17.600" height="17.600" fill="#56c2cc"><path d="M16 8s-3-5.500-8-5.500S0 8 0 8s3 5.500 8 5.500S16 8 16 8M1.173 8a13 13 0 0 1 1.660-2.043C4.120 4.668 5.880 3.500 8 3.500s3.879 1.168 5.168 2.457A13 13 0 0 1 14.828 8q-.086.130-.195.288c-.335.480-.830 1.120-1.465 1.755C11.879 11.332 10.119 12.500 8 12.500s-3.879-1.168-5.168-2.457A13 13 0 0 1 1.172 8z"/><path d="M8 5.500a2.500 2.500 0 1 0 0 5 2.500 2.500 0 0 0 0-5M4.500 8a3.500 3.500 0 1 1 7 0 3.500 3.500 0 0 1-7 0"/></svg></td></tr>
</tbody>
</table>
</div>
<div id="pscroll" class="abs"><div id="pthumb" class="abs"></div>
<svg class="abs" style="left:4px;top:8px" width="12" height="7" viewBox="0 0 12 7"><path d="M5.500 .800l4.600 5.200H.900z" fill="#a3a3a3"/></svg>
<svg class="abs" style="left:4px;top:636px" width="13" height="7" viewBox="0 0 13 7"><path d="M6 6.300L1 .800h10z" fill="#505050"/></svg>
</div>
</div>
<svg class="abs" style="left:1883.500px;top:698.500px" width="14" height="21" viewBox="0 0 14 21"><path d="M.8 .8v16.200l4-3.700 2.500 5.600 2.600-1.100-2.500-5.500h5.200z" fill="#fff" stroke="#111" stroke-width="1.100" stroke-linejoin="round"/></svg>
<div id="taskbar" class="abs">
<!-- start -->
<svg class="abs" style="left:26px;top:16px" width="30" height="30" viewBox="0 0 30 30"><defs><linearGradient id="wg" x1="0" y1="0" x2="1" y2="1"><stop offset="0" stop-color="#7fdcfa"/><stop offset="1" stop-color="#179fe6"/></linearGradient></defs><rect x="0" y="0" width="14" height="14" rx="1" fill="url(#wg)"/><rect x="15.500" y="0" width="14" height="14" rx="1" fill="url(#wg)"/><rect x="0" y="15.500" width="14" height="14" rx="1" fill="url(#wg)"/><rect x="15.500" y="15.500" width="14" height="14" rx="1" fill="url(#wg)"/></svg>
<!-- search -->
<svg class="abs" style="left:82px;top:14px" width="32" height="32" viewBox="0 0 32 32"><circle cx="14" cy="14" r="10.300" fill="#4b4b4b" stroke="#f4f4f4" stroke-width="3.200"/><path d="M21.800 22.300l5.700 6" stroke="#f4f4f4" stroke-width="3.600" stroke-linecap="round"/></svg>
<!-- explorer -->
<svg class="abs" style="left:136px;top:15px" width="32" height="30" viewBox="0 0 32 30"><path d="M1 4.500a2 2 0 0 1 2-2h8.500l3 3H29a2 2 0 0 1 2 2V27a2 2 0 0 1-2 2H3a2 2 0 0 1-2-2z" fill="#e9b025"/><path d="M1 9.500a2 2 0 0 1 2-2h26a2 2 0 0 1 2 2V27a2 2 0 0 1-2 2H3a2 2 0 0 1-2-2z" fill="#ffd766"/><path d="M7 22.500a2 2 0 0 1 2-2h14a2 2 0 0 1 2 2V29H7z" fill="#1b6fc9"/><rect x="11" y="23.500" width="10" height="2" rx="1" fill="#58a6ee"/></svg>
<div class="pill" style="left:148.300px"></div>
<!-- edge -->
<svg class="abs" style="left:191px;top:14px" width="32" height="32" viewBox="0 0 32 32"><defs><linearGradient id="eg1" x1="0" y1="0" x2="1" y2="0"><stop offset="0" stop-color="#2fc1d8"/><stop offset="1" stop-color="#6fe07a"/></linearGradient></defs><circle cx="16" cy="16" r="15.300" fill="#1a6fc4"/><path d="M3 9C7 2 16 -1 23.500 2.500c6 3 8.500 9 7.300 13.800-.8 3-3.500 4.700-6.800 4.700-3 0-5.800-1.500-5.300-4 .4-2 1.300-2.500.800-4.500C18.500 9 14.500 7 10.500 7.300 7.500 7.500 5 8 3 9z" fill="url(#eg1)"/><path d="M2 22c-2.500-8 2.500-14.500 9-14.800-3 1.800-4.500 5-4 9 .7 5.300 5.500 9.500 11.500 9.500 3 0 5.500-.8 7.500-2.300-2.500 5-8 8.500-14 7.500C7.500 30 3.500 27 2 22z" fill="#114a9c"/><path d="M12.500 17.500c0 4 3.300 7 7.500 7 2.300 0 4.500-.8 6-2-2.500.8-5.800.3-7.500-1.500-1.500-1.500-1.800-3.700-.8-5.500z" fill="#1c1c1c" opacity=".55"/></svg>
<!-- red app -->
<svg class="abs" style="left:247.500px;top:15px" width="31" height="30" viewBox="0 0 31 30"><rect width="31" height="30" rx="2" fill="#9c0a1c"/><path d="M2 12.500c3-2 7-2.500 10-2l4-2c2 0 4 .8 5.500 2l5 .5c.8.600 1 1.300.5 2l-4.500.3 3 2.200-4-.5-4.500 1.500-3.500-1.500-5 1 2-2c-3-.8-6-.8-8.500.5z" fill="#1a0508"/><rect y="21" width="31" height="1.200" fill="#7d0715"/><rect y="24.500" width="31" height="1.200" fill="#7d0715"/></svg>
<!-- chrome + badge -->
<svg class="abs" style="left:301px;top:8px" width="40" height="40" viewBox="0 0 40 40"><g transform="translate(1,8)"><circle cx="15" cy="15" r="15" fill="#fff"/><path d="M15 15L2 7.500A15 15 0 0 1 28 7.500z" fill="#e33b2e"/><path d="M15 15L28 7.500A15 15 0 0 1 15 30z" fill="#fcc934"/><path d="M15 15L15 30A15 15 0 0 1 2 7.500z" fill="#2da94f"/><circle cx="15" cy="15" r="6.900" fill="#fff"/><circle cx="15" cy="15" r="5.500" fill="#3b7de9"/></g><circle cx="27.500" cy="10.500" r="9.800" fill="#f6d85c"/><path d="M22.500 14V9l2.500 2 2.500-3.500 2.500 3.500 2.500-2v5z" fill="#e8743a"/></svg>
<div class="pill" style="left:312.500px"></div>
<!-- acrobat -->
<svg class="abs" style="left:358.500px;top:15.800px" width="27.500" height="26" viewBox="0 0 28 27" preserveAspectRatio="none"><rect width="28" height="27" rx="4" fill="#b30b12"/><path d="M6 20.500c2.500-1 5.500-5 7-10 .6-2 .6-4.500-.6-4.500-1.400 0-1 3 .2 5.500 1.600 3.300 5 6.300 8 6.500 1.800.1 2-1.600.2-1.900-3.800-.6-10 1.300-13.500 3.300-1.700 1-2.600 1.600-1.300 1.100z" fill="none" stroke="#fff" stroke-width="1.600" stroke-linejoin="round"/></svg>
<div class="pill" style="left:368.200px"></div>
<!-- visual studio -->
<svg class="abs" style="left:412px;top:15px" width="31" height="30" viewBox="0 0 31 30"><path d="M22 .500l8.500 4v21L22 29.500 8 17.500 3.200 21.500.5 20V10l2.700-1.500L8 12.500z" fill="#9b6ad6"/><path d="M22 .500l8.500 4v21L22 29.500z" fill="#c99cf5"/><path d="M22 8.500v13L13 15z" fill="#1c1c1c"/><path d="M3.200 8.500L22 29.500 8 17.500 3.200 21.500.5 20 5.500 15 .5 10z" fill="#7a4cc0"/></svg>
<div class="pill" style="left:423.500px"></div>
<!-- word -->
<svg class="abs" style="left:467px;top:16px" width="30" height="28" viewBox="0 0 30 28"><rect x="12" y="3" width="17" height="22" rx="1" fill="#fff"/><path d="M17 7.500h10M17 11h10M17 14.500h10M17 18h10M17 21.500h10" stroke="#2b579a" stroke-width="1.700"/><path d="M0 3l18-3v28L0 25z" fill="#2b579a"/></svg>
<div class="abs" style="left:470.500px;top:22px;width:14px;font-size:15px;font-weight:700;color:#fff;line-height:16px;text-align:center;letter-spacing:-.5px">W</div>
<div class="pill" style="left:478px"></div>
<!-- terminal -->
<svg class="abs" style="left:521.500px;top:18px" width="31" height="23" viewBox="0 0 31 23"><rect width="31" height="23" rx="2" fill="#3d3d3d"/><path d="M0 2a2 2 0 0 1 2-2h27a2 2 0 0 1 2 2v2.800H0z" fill="#8d8d8d"/><rect x="0" y="0" width="10" height="4.800" rx="1.500" fill="#cfcfcf"/><path d="M4.500 9l6 4.500-6 4.500" fill="none" stroke="#fff" stroke-width="2.300"/><path d="M13 18.500h10" stroke="#fff" stroke-width="2.300"/></svg>
<div class="pill" style="left:534px"></div>
<svg class="abs" style="left:508px;top:48px" width="29" height="10" viewBox="0 0 29 10"><path d="M0 10V4a4 4 0 0 1 4-4h20a4 4 0 0 1 4 4v6z" fill="#3b5aa3"/><rect x="3.800" y="3.400" width="14" height="12" rx="2.800" fill="none" stroke="#dfe6f5" stroke-width="1.300"/><path d="M8 10V8h3.500c2 0 3.300 1 3.800 2" fill="none" stroke="#dfe6f5" stroke-width="1.200"/><path d="M19.500 9.300h3.500" stroke="#dfe6f5" stroke-width="1.200"/></svg>
<!-- obs -->
<svg class="abs" style="left:576px;top:13px" width="36" height="34" viewBox="0 0 36 34"><circle cx="15.700" cy="18.400" r="14" fill="#050505" stroke="#fff" stroke-width="1.800"/><g fill="none" stroke="#fff" stroke-width="2.100"><path d="M15.700 6.500c3.500 1.500 4.500 6 1.500 9.500-1.500 1.800-4 2-6 1"/><path d="M26 24c-3 2.300-7.500.9-9-3.400-.8-2.200.3-4.500 2.200-5.700"/><path d="M5.500 24.500c-.5-3.800 2.800-7 7.300-6.200 2.300.4 3.700 2.500 3.800 4.700"/></g><circle cx="27" cy="7.500" r="7.400" fill="#e8001c"/></svg>
<div class="pill" style="left:588px"></div>
<!-- chrome active -->
<div class="abs" style="left:622px;top:5px;width:50px;height:53px;border-radius:5px 5px 0 0;background:#2b2b2b"></div>
<svg class="abs" style="left:632px;top:14.500px" width="30" height="30" viewBox="0 0 30 30"><circle cx="15" cy="15" r="15" fill="#fff"/><path d="M15 15L2 7.500A15 15 0 0 1 28 7.500z" fill="#e33b2e"/><path d="M15 15L28 7.500A15 15 0 0 1 15 30z" fill="#fcc934"/><path d="M15 15L15 30A15 15 0 0 1 2 7.500z" fill="#2da94f"/><circle cx="15" cy="15" r="6.900" fill="#fff"/><circle cx="15" cy="15" r="5.500" fill="#3b7de9"/></svg>
<div class="pill" style="left:637.500px;width:19.500px;background:#82d9d2"></div>
<!-- tray -->
<svg class="abs" style="left:1514px;top:23px" width="18" height="12" viewBox="0 0 18 12"><path d="M2.500 10L9 3.500 15.500 10" fill="none" stroke="#fff" stroke-width="2"/></svg>
<svg class="abs" style="left:1551px;top:18px" width="24" height="24" viewBox="0 0 24 24"><path d="M3.500 12a8.500 8.500 0 0 1 15-5.500M20.500 12a8.500 8.500 0 0 1-15 5.500" fill="none" stroke="#f0f0f0" stroke-width="1.500"/><path d="M19 2v5h-5M5 22v-5h5" fill="none" stroke="#f0f0f0" stroke-width="1.500"/><circle cx="17.600" cy="17" r="4.800" fill="#2b84e4"/></svg>
<svg class="abs" style="left:1594px;top:19px" width="18" height="22" viewBox="0 0 18 22"><rect x="5.700" y="1" width="6.600" height="12.500" rx="3.300" fill="#5fae97" stroke="#a9e8d2" stroke-width="1.500"/><path d="M2.500 10.500a6.500 6.500 0 0 0 13 0M9 17v3.500" fill="none" stroke="#a9e8d2" stroke-width="1.600"/></svg>
<div class="abs" style="left:1636px;top:20.500px;font-size:14.200px;line-height:18px;color:#fff;letter-spacing:-.1px">ENG</div>
<svg class="abs" style="left:1686px;top:20px" width="20" height="20" viewBox="0 0 20 20"><circle cx="10" cy="10" r="8.500" fill="none" stroke="#eee" stroke-width="1.400"/><path d="M1.500 10h17M10 1.500c-5 4.500-5 12.500 0 17c5-4.500 5-12.500 0-17" fill="none" stroke="#eee" stroke-width="1.300"/></svg>
<div class="abs" style="left:1803px;top:12px;width:64px;text-align:right;font-size:14px;line-height:18px;color:#fff;white-space:nowrap">12:59 AM</div>
<div class="abs" style="left:1790px;top:33px;width:77px;text-align:right;font-size:14px;line-height:18px;color:#fff;white-space:nowrap">8/18/2024</div>
<svg class="abs" style="left:1877px;top:20px" width="18" height="21" viewBox="0 0 18 21"><path d="M9 .800c-3.500 0-5.800 2.700-5.800 6.200 0 4-1.200 6.300-2.700 8.500h17c-1.500-2.200-2.700-4.500-2.700-8.500 0-3.500-2.300-6.200-5.800-6.200z" fill="#a3e9de"/><path d="M6.300 17h5.400a2.700 2.700 0 0 1-5.400 0z" fill="#a3e9de"/></svg>
<!-- watermark -->
<div class="wm" style="left:1697.500px;top:10.500px;transform:scaleX(.830)"><span class="wmb">KHOA</span><span class="wmf">KHOA</span></div>
<div class="wm" style="left:1809.500px;top:10.500px;transform:scaleX(.800)"><span class="wmb">DEV</span><span class="wmf">DEV</span></div>
</div>
</body></html>
